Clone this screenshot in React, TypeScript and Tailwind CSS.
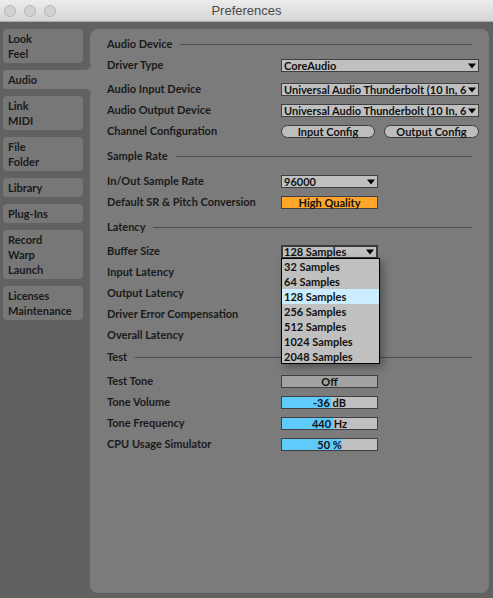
import React from 'react';

const FONT = "font-['Lato','Liberation_Sans',sans-serif]";

const tabs: { lines: string[]; active?: boolean }[] = [
  { lines: ['Look', 'Feel'] },
  { lines: ['Audio'], active: true },
  { lines: ['Link', 'MIDI'] },
  { lines: ['File', 'Folder'] },
  { lines: ['Library'] },
  { lines: ['Plug-Ins'] },
  { lines: ['Record', 'Warp', 'Launch'] },
  { lines: ['Licenses', 'Maintenance'] },
];

const bufferSizes = ['32 Samples', '64 Samples', '128 Samples', '256 Samples', '512 Samples', '1024 Samples', '2048 Samples'];

// small black down-arrow used by every chooser
const Arrow: React.FC = () => (
  <svg width="8" height="6" viewBox="0 0 8 6" className="shrink-0">
    <path d="M0 0.5 H8 L4 5.5 Z" fill="#000" />
  </svg>
);

const SectionHeader: React.FC<{ title: string; className?: string }> = ({ title, className = '' }) => (
  <div className={`flex items-center h-[21px] mr-[7px] ${className}`}>
    <span className="font-bold text-[11px] text-[#1a1a1a]">{title}</span>
    <div className="flex-1 h-px bg-[#4c4c4c] ml-[8px]" />
  </div>
);

const Row: React.FC<{ label: string; className?: string; children?: React.ReactNode }> = ({ label, className = '', children }) => (
  <div className={`flex items-center h-[21px] ${className}`}>
    <span className="w-[174px] shrink-0 font-bold text-[11px] text-[#1a1a1a] whitespace-nowrap">{label}</span>
    {children}
  </div>
);

const Dropdown: React.FC<{ value: string; wide?: boolean; open?: boolean }> = ({ value, wide, open }) => (
  <div
    className={`flex items-center ${wide ? 'w-[198px]' : 'w-[97px]'} bg-[#c0c0c0] ${
      open ? 'border-2 border-[#3a3a3a] h-[14px] pl-[1px]' : 'border border-[#404040] h-[13px] pl-[2px]'
    } pr-[2px] gap-[1px]`}
  >
    <span className="flex-1 min-w-0 overflow-hidden whitespace-nowrap font-bold text-[11px] leading-[12px] text-[#111]">{value}</span>
    <Arrow />
  </div>
);

const PillButton: React.FC<{ label: string; width: string }> = ({ label, width }) => (
  <div className={`${width} h-[13px] rounded-full border border-[#3c3c3c] bg-[#bdbdbd] flex items-center justify-center font-bold text-[11px] leading-[11px] text-[#111]`}>
    {label}
  </div>
);

const Slider: React.FC<{ value: string; fill: number }> = ({ value, fill }) => (
  <div className="relative w-[97px] h-[13px] border border-[#404040] bg-[#c0c0c0] overflow-hidden">
    <div className="absolute left-0 top-0 bottom-0 bg-[#5ecbfb]" style={{ width: `${fill}px` }} />
    <span className="relative flex h-full items-center justify-center font-bold text-[11px] leading-[11px] text-[#111]">{value}</span>
  </div>
);

const TabLines: React.FC<{ lines: string[] }> = ({ lines }) => (
  <>
    {lines.map((l) => (
      <div key={l} className="h-[15px] leading-[15px] font-bold text-[11px] text-[#1a1a1a]">{l}</div>
    ))}
  </>
);

export default function App() {
  return (
    <div className={`w-[493px] h-[598px] bg-[#616161] flex flex-col overflow-hidden ${FONT}`}>
      {/* title bar */}
      <div className="relative h-[22px] shrink-0 bg-gradient-to-b from-[#ececec] to-[#d5d5d5] border-b border-[#a9a9a9] flex items-center">
        <div className="flex gap-[8px] pl-[4px]">
          <span className="w-[12px] h-[12px] rounded-full bg-[#d2d2d2] border border-[#b4b4b4]" />
          <span className="w-[12px] h-[12px] rounded-full bg-[#d2d2d2] border border-[#b4b4b4]" />
          <span className="w-[12px] h-[12px] rounded-full bg-[#d2d2d2] border border-[#b4b4b4]" />
        </div>
        <span className="absolute left-0 right-0 text-center font-['Liberation_Sans',sans-serif] text-[13px] text-[#4a4a4a]">Preferences</span>
      </div>

      <div className="flex flex-1 pt-[7px] pb-[5px] pr-[4px]">
        {/* tab column */}
        <div className="w-[90px] shrink-0 flex flex-col gap-[7.5px] pl-[3px]">
          {tabs.map((t) =>
            t.active ? (
              <div key={t.lines[0]} className="relative bg-[#7b7b7b] rounded-l-[4px] px-[5px] py-[1.75px] -mr-px">
                <span className="absolute -top-[6px] right-0 w-[6px] h-[6px] bg-[#7b7b7b]">
                  <span className="block w-full h-full bg-[#616161] rounded-br-[6px]" />
                </span>
                <span className="absolute -bottom-[6px] right-0 w-[6px] h-[6px] bg-[#7b7b7b]">
                  <span className="block w-full h-full bg-[#616161] rounded-tr-[6px]" />
                </span>
                <TabLines lines={t.lines} />
              </div>
            ) : (
              <div key={t.lines[0]} className="w-[80px] bg-[#777777] rounded-[4px] px-[5px] py-[1.75px]">
                <TabLines lines={t.lines} />
              </div>
            )
          )}
        </div>

        {/* audio settings panel */}
        <div className="flex-1 bg-[#7b7b7b] rounded-[8px] pl-[17px] pr-[10px] pt-[5px]">
          <SectionHeader title="Audio Device" />
          <Row label="Driver Type"><Dropdown value="CoreAudio" wide /></Row>
          <Row label="Audio Input Device" className="mt-[3px]">
            <Dropdown value="Universal Audio Thunderbolt (10 In, 6 Out)" wide />
          </Row>
          <Row label="Audio Output Device">
            <Dropdown value="Universal Audio Thunderbolt (10 In, 6 Out)" wide />
          </Row>
          <Row label="Channel Configuration">
            <div className="flex gap-[9px]">
              <PillButton label="Input Config" width="w-[94px]" />
              <PillButton label="Output Config" width="w-[95px]" />
            </div>
          </Row>

          <SectionHeader title="Sample Rate" className="mt-[4px]" />
          <Row label="In/Out Sample Rate" className="mt-[4px]"><Dropdown value="96000" /></Row>
          <Row label="Default SR & Pitch Conversion">
            <div className="w-[97px] h-[13px] border border-[#404040] bg-[#ffa62b] flex items-center justify-center font-bold text-[11px] leading-[11px] text-[#111]">
              High Quality
            </div>
          </Row>

          <SectionHeader title="Latency" className="mt-[4px]" />
          <Row label="Buffer Size" className="mt-[3px] relative z-10">
            <div className="relative">
              <Dropdown value="128 Samples" open />
              <div className="absolute left-0 top-[13px] w-[99px] h-[106px] border border-black bg-[#c0c0c0] overflow-hidden shadow-[3px_3px_8px_rgba(0,0,0,0.35)]">
                {bufferSizes.map((s) => (
                  <div
                    key={s}
                    className={`h-[15px] leading-[15px] px-[2px] font-bold text-[11px] text-[#111] ${s === '128 Samples' ? 'bg-[#caeeff]' : ''}`}
                  >
                    {s}
                  </div>
                ))}
              </div>
            </div>
          </Row>
          <Row label="Input Latency" />
          <Row label="Output Latency" />
          <Row label="Driver Error Compensation" />
          <Row label="Overall Latency" />

          <SectionHeader title="Test" className="mt-[1px]" />
          <Row label="Test Tone" className="mt-[3px]">
            <div className="w-[97px] h-[13px] border border-[#404040] bg-[#a2a2a2] flex items-center justify-center font-bold text-[11px] leading-[11px] text-[#111]">
              Off
            </div>
          </Row>
          <Row label="Tone Volume"><Slider value="-36 dB" fill={49} /></Row>
          <Row label="Tone Frequency"><Slider value="440 Hz" fill={51} /></Row>
          <Row label="CPU Usage Simulator"><Slider value="50 %" fill={60} /></Row>
        </div>
      </div>
    </div>
  );
}
